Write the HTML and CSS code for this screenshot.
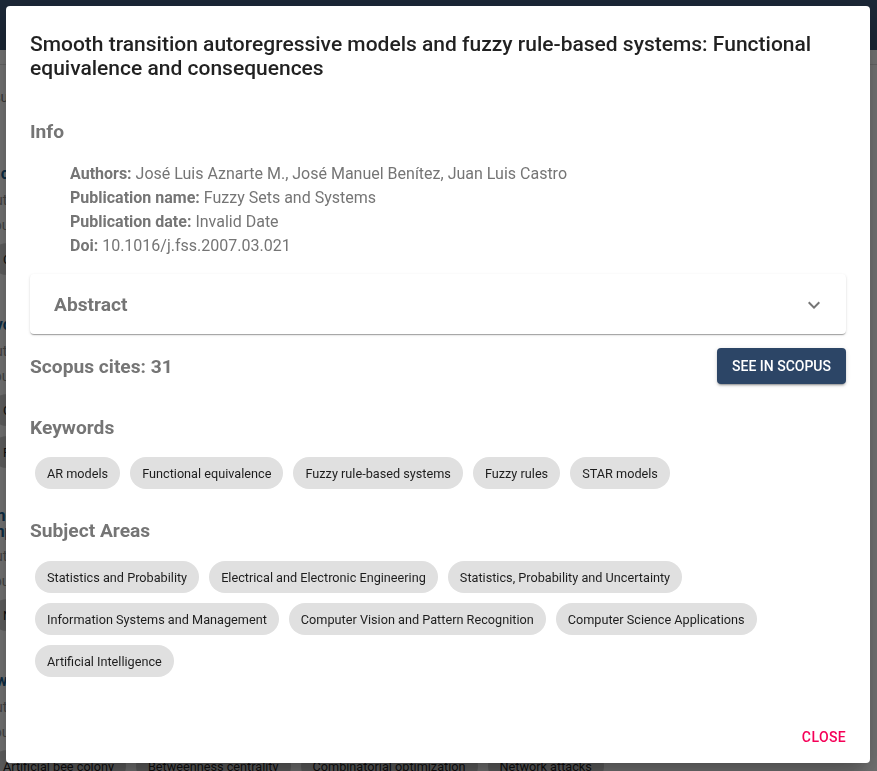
FILE: index.html
```html
<!DOCTYPE html>
<html lang="en">
<head>
<meta charset="utf-8">
<title>Publication</title>
<link rel="stylesheet" href="styles.css">
</head>
<body>
<div class="page">
  <header class="appbar"></header>
  <div class="subbar"></div>
  <div class="results">9 results found</div>
  <div class="list">
    <article class="pub">
      <h3 class="pub-title">A comprehensive study of metaheuristics</h3>
      <p class="pub-line">Authors: Sofía Martínez, Pedro García</p>
      <p class="pub-line">Journal: Applied Soft Computing</p>
      <div class="pub-chips"><span class="bg-chip">Optimization</span><span class="bg-chip">Heuristics</span></div>
    </article>
    <article class="pub">
      <h3 class="pub-title">Evolutionary approaches to ranking</h3>
      <p class="pub-line">Authors: Ana Ruiz, Carlos Pérez</p>
      <p class="pub-line">Journal: Information Sciences</p>
      <div class="pub-chips pub-chips-stacked"><span class="bg-chip">Genetic algorithms</span><span class="bg-chip">Ranking</span></div>
    </article>
    <article class="pub">
      <h3 class="pub-title pub-title-2line">Anomaly detection in complex networks<br>Improved protection strategies</h3>
      <p class="pub-line">Authors: Luis Gómez, Elena Torres</p>
      <p class="pub-line">Journal: Knowledge-Based Systems</p>
      <div class="pub-chips"><span class="bg-chip">Networks</span><span class="bg-chip">Security</span></div>
    </article>
    <article class="pub">
      <h3 class="pub-title">Swarm optimization for network robustness</h3>
      <p class="pub-line">Authors: Marta López, Jorge Sanz</p>
      <p class="pub-line">Journal: Physica A</p>
      <div class="pub-chips"><span class="bg-chip">Artificial bee colony</span><span class="bg-chip">Betweenness centrality</span><span class="bg-chip">Combinatorial optimization</span><span class="bg-chip">Network attacks</span></div>
    </article>
  </div>
</div>

<div class="backdrop"></div>

<div class="dialog" role="dialog" aria-labelledby="dlg-title">
  <h2 class="dialog-title" id="dlg-title">Smooth transition autoregressive models and fuzzy rule-based systems: Functional equivalence and consequences</h2>
  <div class="dialog-content">
    <h3 class="section-heading heading-info">Info</h3>
    <ul class="info-list">
      <li><b class="info-label">Authors:</b> José Luis Aznarte M., José Manuel Benítez, Juan Luis Castro</li>
      <li><b class="info-label">Publication name:</b> Fuzzy Sets and Systems</li>
      <li><b class="info-label">Publication date:</b> Invalid Date</li>
      <li><b class="info-label">Doi:</b> 10.1016/j.fss.2007.03.021</li>
    </ul>
    <div class="accordion">
      <span class="section-heading">Abstract</span>
      <svg class="expand-icon" viewBox="0 0 24 24" width="24" height="24" aria-hidden="true"><path d="M16.59 8.59L12 13.17 7.41 8.59 6 10l6 6 6-6z"/></svg>
    </div>
    <div class="scopus-row">
      <h3 class="section-heading">Scopus cites: 31</h3>
      <button class="btn-contained" type="button">See in Scopus</button>
    </div>
    <h3 class="section-heading heading-keywords">Keywords</h3>
    <div class="chips chips-keywords">
      <span class="chip">AR models</span>
      <span class="chip">Functional equivalence</span>
      <span class="chip">Fuzzy rule-based systems</span>
      <span class="chip">Fuzzy rules</span>
      <span class="chip">STAR models</span>
    </div>
    <h3 class="section-heading heading-subjects">Subject Areas</h3>
    <div class="chips chips-subjects">
      <span class="chip">Statistics and Probability</span>
      <span class="chip">Electrical and Electronic Engineering</span>
      <span class="chip">Statistics, Probability and Uncertainty</span>
      <span class="chip">Information Systems and Management</span>
      <span class="chip">Computer Vision and Pattern Recognition</span>
      <span class="chip">Computer Science Applications</span>
      <span class="chip">Artificial Intelligence</span>
    </div>
  </div>
  <div class="dialog-actions">
    <button class="btn-text" type="button">Close</button>
  </div>
</div>
</body>
</html>
```

FILE: styles.css
```css
* { box-sizing: border-box; }

html, body {
  margin: 0;
  padding: 0;
  height: 100%;
  overflow: hidden;
}

body {
  font-family: Roboto, "Liberation Sans", Arial, sans-serif;
  background: #eeeeee;
}

/* ---------- background page ---------- */
.page {
  width: 100%;
}

.appbar {
  height: 50px;
  background: #39506f;
}

.subbar {
  height: 15px;
  border-bottom: 1px solid #d0d0d0;
}

.results {
  margin-left: -30px;
  padding-top: 22px;
  font-size: 14px;
  line-height: 20px;
  color: #777;
}

.list {
  margin-left: -14px;
  padding-top: 57px;
}

.pub {
  margin-bottom: 35px;
}

.pub-title {
  margin: 0;
  font-size: 16px;
  line-height: 20px;
  font-weight: 700;
  color: #175a8a;
  white-space: nowrap;
}

.pub-title-2line {
  line-height: 16px;
}

.pub-line {
  margin: 0;
  font-size: 14px;
  line-height: 25px;
  color: #8a8a8a;
  white-space: nowrap;
}

.pub-title + .pub-line { margin-top: 4px; }

.pub-chips {
  display: flex;
  flex-wrap: nowrap;
}

.pub-chips-stacked {
  flex-direction: column;
  align-items: flex-start;
}

.bg-chip {
  display: inline-flex;
  align-items: center;
  height: 32px;
  margin: 5px;
  padding: 0 12px;
  border-radius: 16px;
  background: #c4c4c4;
  color: rgba(0, 0, 0, 0.87);
  font-size: 12.7px;
  white-space: nowrap;
}

/* ---------- backdrop + dialog (overlay) ---------- */
.backdrop {
  position: fixed;
  inset: 0;
  background: rgba(0, 0, 0, 0.5);
}

.dialog {
  position: fixed;
  top: 6px;
  left: 6px;
  width: 864px;
  height: 757px;
  display: flex;
  flex-direction: column;
  background: #fff;
  border-radius: 4px;
  box-shadow: 0 11px 15px -7px rgba(0,0,0,0.2), 0 24px 38px 3px rgba(0,0,0,0.14), 0 9px 46px 8px rgba(0,0,0,0.12);
  overflow: hidden;
}

.dialog-title {
  margin: 0;
  padding: 26px 24px 0;
  font-size: 21px;
  line-height: 24px;
  font-weight: 500;
  color: rgba(0, 0, 0, 0.87);
}

.dialog-content {
  flex: 1;
  padding: 0 24px;
  overflow: hidden;
}

.section-heading {
  margin: 0;
  font-size: 19.2px;
  line-height: 28px;
  font-weight: 700;
  color: #757575;
}

.heading-info { margin-top: 38px; }

.info-list {
  list-style: none;
  margin: 16px 0 0;
  padding: 0 0 0 40px;
  font-size: 16px;
  line-height: 24px;
  color: #757575;
}

.info-label {
  font-weight: 700;
}

.accordion {
  margin-top: 16px;
  height: 60px;
  display: flex;
  align-items: center;
  justify-content: space-between;
  padding: 2px 20px 0 24px;
  background: #fff;
  border-radius: 4px;
  box-shadow: 0 2px 1px -1px rgba(0,0,0,0.2), 0 1px 1px 0 rgba(0,0,0,0.14), 0 1px 3px 0 rgba(0,0,0,0.12);
}

.expand-icon {
  fill: rgba(0, 0, 0, 0.54);
  display: block;
}

.scopus-row {
  margin-top: 14px;
  height: 36px;
  display: flex;
  align-items: center;
  justify-content: space-between;
}

.scopus-row .section-heading {
  padding-top: 2px;
}

.btn-contained {
  height: 36px;
  padding: 6px 15px;
  border: 0;
  border-radius: 4px;
  background: #2c4566;
  color: #fff;
  font-family: inherit;
  font-size: 14px;
  font-weight: 500;
  letter-spacing: 0;
  text-transform: uppercase;
  box-shadow: 0 3px 1px -2px rgba(0,0,0,0.2), 0 2px 2px 0 rgba(0,0,0,0.14), 0 1px 5px 0 rgba(0,0,0,0.12);
}

.heading-keywords { margin-top: 30px; }
.heading-subjects { margin-top: 23px; }

.chips {
  display: flex;
  flex-wrap: wrap;
}

.chips-keywords { margin-top: 10px; }
.chips-subjects { margin-top: 11px; }

.chip {
  display: inline-flex;
  align-items: center;
  height: 32px;
  margin: 5px;
  padding: 0 12px;
  border-radius: 16px;
  background: #e0e0e0;
  color: rgba(0, 0, 0, 0.87);
  font-size: 12.7px;
  white-space: nowrap;
}

.dialog-actions {
  display: flex;
  justify-content: flex-end;
  padding: 8px 14px 8px 8px;
}

.btn-text {
  height: 36px;
  min-width: 64px;
  padding: 6px 8px;
  border: 0;
  border-radius: 4px;
  background: transparent;
  color: #f50057;
  font-family: inherit;
  font-size: 14px;
  font-weight: 500;
  letter-spacing: 0.02857em;
  text-transform: uppercase;
}
```
